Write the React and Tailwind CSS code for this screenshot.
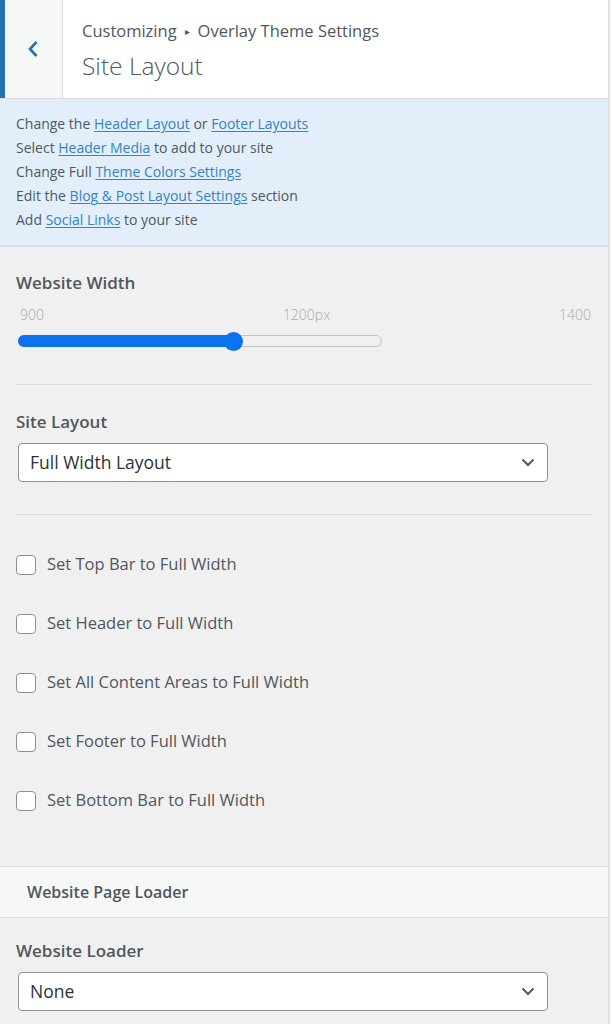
import React from "react";

const font = { fontFamily: '"Open Sans", "Noto Sans", sans-serif' };

function Chevron() {
  return (
    <svg width="14" height="9" viewBox="0 0 14 9" fill="none">
      <path d="M1.5 1.5 L7 7 L12.5 1.5" stroke="#50575e" strokeWidth="2" />
    </svg>
  );
}

function Select({ value }) {
  return (
    <div className="ml-[2px] flex h-[39px] w-[530px] items-center justify-between rounded-[4px] border border-[#8c8f94] bg-white pl-[11px] pr-[12px] text-[17.5px] text-[#2c3338]">
      <span>{value}</span>
      <Chevron />
    </div>
  );
}

function Check({ label }) {
  return (
    <label className="flex h-[59px] items-center gap-[11px]">
      <span className="h-[20px] w-[20px] rounded-[4px] border border-[#8c8f94] bg-white" />
      <span className="text-[16.5px] text-[#50575e]">{label}</span>
    </label>
  );
}

function Link({ children }) {
  return <a className="text-[#3582c4] underline underline-offset-2">{children}</a>;
}

export default function App() {
  return (
    <div style={font} className="min-h-[1024px] w-[611px] bg-[#f0f0f1]">
      <div className="w-[609px] border-r border-[#dcdcde] bg-[#f0f0f1] pb-[20px]">
        {/* header */}
        <div className="flex h-[99px] border-b border-[#dcdcde] bg-white">
          <div className="flex w-[63px] items-center justify-center border-l-[5px] border-r border-l-[#2271b1] border-r-[#dcdcde] bg-[#f6f7f7]">
            <svg width="12" height="18" viewBox="0 0 12 18" fill="none" className="mr-[2px]">
              <path d="M9.5 2 L3 9 L9.5 16" stroke="#2271b1" strokeWidth="2.6" />
            </svg>
          </div>
          <div className="flex flex-col pl-[19px] pt-[19px]">
            <div className="flex items-center text-[16.5px] leading-[24px] text-[#50575e]">
              Customizing
              <span className="mx-[8px] text-[10px]">▸</span>
              Overlay Theme Settings
            </div>
            <div className="mt-[8px] text-[24.5px] font-light leading-[30px] text-[#50575e]">Site Layout</div>
          </div>
        </div>

        {/* notice */}
        <div className="border-b-[2px] border-[#d6e0ea] bg-[#e2effb] px-[16px] pb-[13px] pt-[13px] text-[14px] leading-[24px] text-[#50575e]">
          <div>Change the <Link>Header Layout</Link> or <Link>Footer Layouts</Link></div>
          <div>Select <Link>Header Media</Link> to add to your site</div>
          <div>Change Full <Link>Theme Colors Settings</Link></div>
          <div>Edit the <Link>Blog &amp; Post Layout Settings</Link> section</div>
          <div>Add <Link>Social Links</Link> to your site</div>
        </div>

        {/* website width */}
        <div className="px-[16px] pt-[24px]">
          <div className="text-[17px] font-semibold leading-[24px] text-[#50575e]">Website Width</div>
          <div className="mt-[10px] flex justify-between pl-[4px] pr-[1px] text-[14px] font-light leading-[20px] text-[#a7aaad]">
            <span>900</span>
            <span className="ml-[10px]">1200px</span>
            <span>1400</span>
          </div>
          <div className="relative mt-[7px] h-[18px] w-[366px]">
            <div className="absolute left-[2px] right-0 top-[3px] h-[12px] rounded-full border border-[#c3c4c7] bg-[#f0f0f1]" />
            <div className="absolute left-[2px] top-[3px] h-[12px] w-[216px] rounded-full bg-[#0a74f0]" />
            <div className="absolute left-[208px] top-0 h-[19px] w-[19px] rounded-full bg-[#0a74f0]" />
          </div>
          <div className="mt-[34px] h-px bg-[#dcdcde]" />
        </div>

        {/* site layout */}
        <div className="px-[16px] pt-[25px]">
          <div className="text-[17px] font-semibold leading-[24px] text-[#50575e]">Site Layout</div>
          <div className="mt-[9px]">
            <Select value="Full Width Layout" />
          </div>
          <div className="mt-[32px] h-px bg-[#dcdcde]" />
        </div>

        {/* checkboxes */}
        <div className="px-[16px] pt-[20px]">
          <Check label="Set Top Bar to Full Width" />
          <Check label="Set Header to Full Width" />
          <Check label="Set All Content Areas to Full Width" />
          <Check label="Set Footer to Full Width" />
          <Check label="Set Bottom Bar to Full Width" />
        </div>

        {/* section heading */}
        <div className="mt-[36px] flex h-[52px] items-center border-y border-[#dcdcde] bg-[#f6f7f7] pl-[27px] text-[16px] font-semibold text-[#50575e]">
          Website Page Loader
        </div>

        <div className="px-[16px] pt-[21px]">
          <div className="text-[17px] font-semibold leading-[24px] text-[#50575e]">Website Loader</div>
          <div className="mt-[9px]">
            <Select value="None" />
          </div>
        </div>
      </div>
    </div>
  );
}
